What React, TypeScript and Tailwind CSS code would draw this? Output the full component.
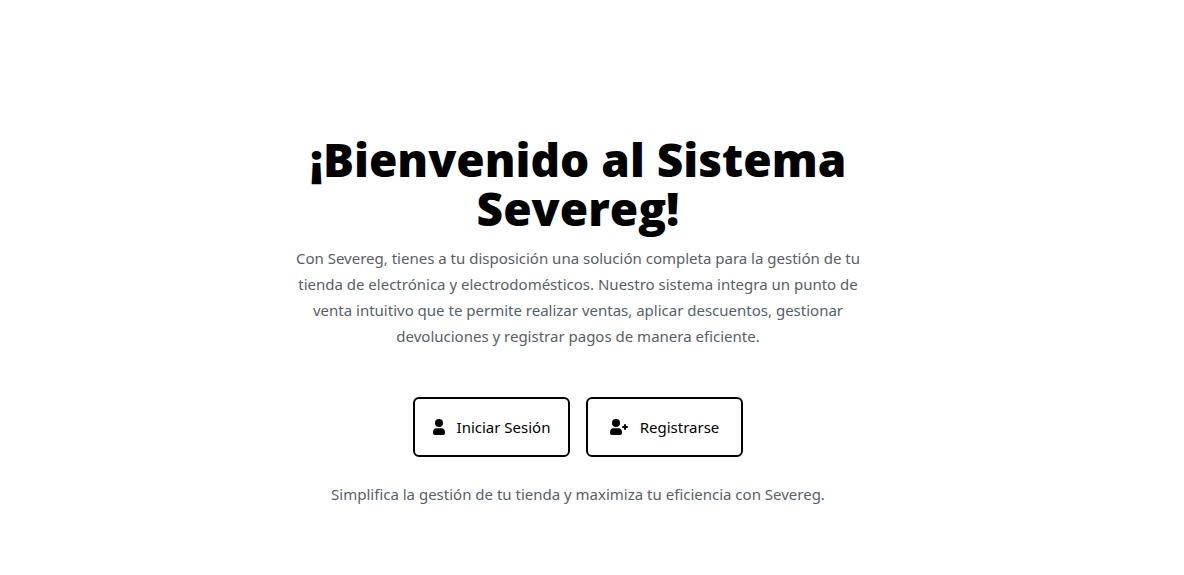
import type { ReactNode } from 'react';

function UserIcon() {
  return (
    <svg width="12" height="16" viewBox="0 0 12 16" fill="currentColor" aria-hidden="true">
      <circle cx="6" cy="4" r="4" />
      <path d="M3.400 9.200h5.200C10.800 9.200 12 11 12 13.300V14c0 1.300-.8 2-2 2H2c-1.200 0-2-.7-2-2v-.7C0 11 1.200 9.200 3.400 9.200Z" />
    </svg>
  );
}

function UserPlusIcon() {
  return (
    <svg width="18" height="16" viewBox="0 0 18 16" fill="currentColor" aria-hidden="true">
      <circle cx="6" cy="4" r="4" />
      <path d="M3.400 9.200h5.200C10.800 9.200 12 11 12 13.300V14c0 1.300-.8 2-2 2H2c-1.200 0-2-.7-2-2v-.7C0 11 1.200 9.200 3.400 9.200Z" />
      <path d="M15 6v4M13 8h4" fill="none" stroke="currentColor" strokeWidth="2" strokeLinecap="round" />
    </svg>
  );
}

function ActionButton({ children }: { children: ReactNode }) {
  return (
    <button
      type="button"
      className="flex h-15 w-[157px] items-center justify-center gap-3 rounded-md border-2 border-black bg-white text-[15px] leading-6 text-black"
    >
      {children}
    </button>
  );
}

export default function App() {
  return (
    <main className="flex min-h-screen justify-center bg-white pt-[135px] pr-7 pl-4 font-['Noto_Sans','Open_Sans',sans-serif]">
      <section className="mr-4 w-full max-w-[584px] text-center">
        <h1 className="font-['Open_Sans','Noto_Sans',sans-serif] text-[46px] leading-[49px] font-extrabold text-black">
          ¡Bienvenido al Sistema Severeg!
        </h1>
        <p className="mt-3 text-[15px] leading-[26px] text-[#566069]">
          Con Severeg, tienes a tu disposición una solución completa para la gestión de tu tienda de
          electrónica y electrodomésticos. Nuestro sistema integra un punto de venta intuitivo que te
          permite realizar ventas, aplicar descuentos, gestionar devoluciones y registrar pagos de
          manera eficiente.
        </p>
        <div className="mt-12 flex justify-center gap-4">
          <ActionButton>
            <UserIcon />
            <span>Iniciar Sesión</span>
          </ActionButton>
          <ActionButton>
            <UserPlusIcon />
            <span>Registrarse</span>
          </ActionButton>
        </div>
        <p className="mt-6 text-[15px] leading-[26px] text-[#566069]">
          Simplifica la gestión de tu tienda y maximiza tu eficiencia con Severeg.
        </p>
      </section>
    </main>
  );
}
